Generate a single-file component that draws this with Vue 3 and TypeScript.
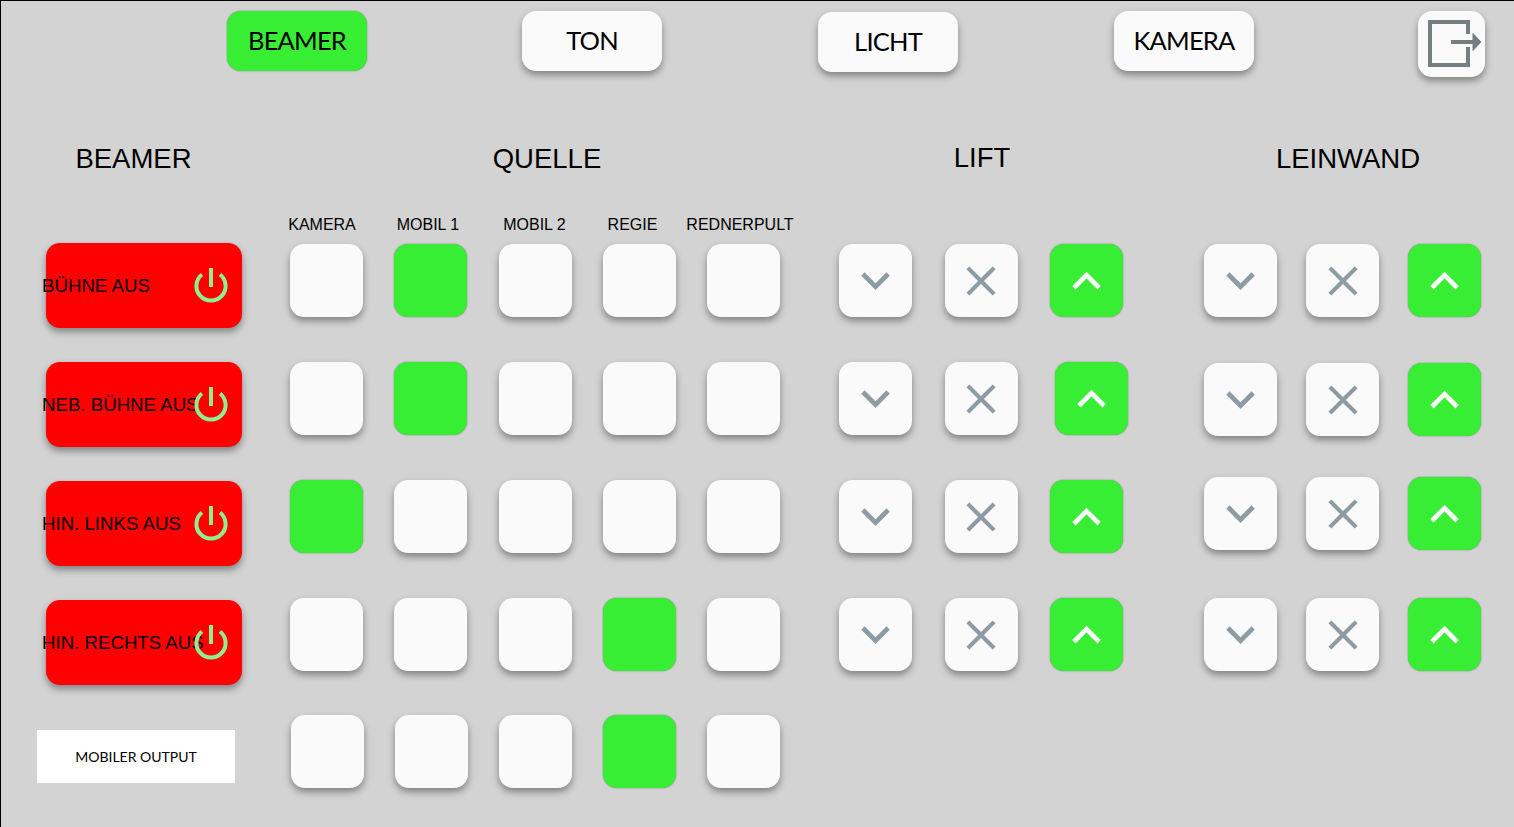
<script setup lang="ts">
const navItems = [
  { label: 'BEAMER', active: true },
  { label: 'TON', active: false },
  { label: 'LICHT', active: false },
  { label: 'KAMERA', active: false },
]

const beamers = ['BÜHNE AUS', 'NEB. BÜHNE AUS', 'HIN. LINKS AUS', 'HIN. RECHTS AUS']
const sources = ['KAMERA', 'MOBIL 1', 'MOBIL 2', 'REGIE', 'REDNERPULT']

// index of the selected source for each output row
const selected = [1, 1, 0, 3, 3]

const rows = [0, 1, 2, 3]
</script>

<template>
  <div class="page">
    <nav class="nav">
      <button
        v-for="item in navItems"
        :key="item.label"
        class="tile nav-btn"
        :class="{ on: item.active }"
      >
        {{ item.label }}
      </button>
      <button class="tile exit" aria-label="Abmelden">
        <svg width="67" height="66" viewBox="0 0 67 66" fill="none" stroke="#757f7f" stroke-width="4">
          <path d="M50 23V11H12V54H50V36" />
          <path d="M33 31H56" />
          <path d="M55 22.5L63 31L55 39.5Z" fill="#757f7f" stroke-width="1" />
        </svg>
      </button>
    </nav>

    <main class="board">
      <section>
        <h2 class="title">BEAMER</h2>
        <div class="power-list">
          <button v-for="name in beamers" :key="name" class="power">
            <span class="power-label">{{ name }}</span>
            <svg class="power-icon" width="40" height="40" viewBox="0 0 40 40" fill="none" stroke="#90ee90">
              <path d="M11 9.5A14.6 14.6 0 1 0 29 9.5" stroke-width="4" />
              <path d="M20 3V22" stroke-width="4" />
            </svg>
          </button>
          <div class="mobile-output">MOBILER OUTPUT</div>
        </div>
      </section>

      <section>
        <h2 class="title">QUELLE</h2>
        <div class="source-labels">
          <span v-for="s in sources" :key="s">{{ s }}</span>
        </div>
        <div class="source-rows">
          <div v-for="(active, r) in selected" :key="r" class="source-row">
            <button
              v-for="(s, i) in sources"
              :key="s"
              class="tile square"
              :class="{ on: i === active }"
              :aria-label="s"
            ></button>
          </div>
        </div>
      </section>

      <section>
        <h2 class="title lift-title">LIFT</h2>
        <div class="motor-rows lift">
          <div v-for="r in rows" :key="r" class="motor-row">
            <button class="tile square" aria-label="runter">
              <svg class="chevron" width="56" height="56" viewBox="0 0 24 24"><path d="M6.4 9L11.8 14.4L17.2 9" /></svg>
            </button>
            <button class="tile square" aria-label="stopp">
              <svg class="cross" width="50" height="50" viewBox="0 0 24 24"><path d="M19 6.41L17.59 5 12 10.59 6.41 5 5 6.41 10.59 12 5 17.59 6.41 19 12 13.41 17.59 19 19 17.59 13.41 12z" /></svg>
            </button>
            <button class="tile square on up" aria-label="hoch">
              <svg class="chevron" width="56" height="56" viewBox="0 0 24 24"><path d="M6.4 14.9L11.8 9.5L17.2 14.9" /></svg>
            </button>
          </div>
        </div>
      </section>

      <section class="screen">
        <h2 class="title">LEINWAND</h2>
        <div class="motor-rows leinwand">
          <div v-for="r in rows" :key="r" class="motor-row">
            <button class="tile square" aria-label="runter">
              <svg class="chevron" width="56" height="56" viewBox="0 0 24 24"><path d="M6.4 9L11.8 14.4L17.2 9" /></svg>
            </button>
            <button class="tile square" aria-label="stopp">
              <svg class="cross" width="50" height="50" viewBox="0 0 24 24"><path d="M19 6.41L17.59 5 12 10.59 6.41 5 5 6.41 10.59 12 5 17.59 6.41 19 12 13.41 17.59 19 19 17.59 13.41 12z" /></svg>
            </button>
            <button class="tile square on" aria-label="hoch">
              <svg class="chevron" width="56" height="56" viewBox="0 0 24 24"><path d="M6.4 14.9L11.8 9.5L17.2 14.9" /></svg>
            </button>
          </div>
        </div>
      </section>
    </main>
  </div>
</template>

<style>
html,
body {
  margin: 0;
  background: #d3d3d3;
}
</style>

<style scoped>
.page {
  box-sizing: border-box;
  width: 1514px;
  height: 827px;
  overflow: hidden;
  background: #d3d3d3;
  border-top: 1px solid #000;
  border-left: 1px solid #000;
  font-family: "Liberation Sans", Arial, sans-serif;
  color: #000;
}

button {
  padding: 0;
  border: 0;
  font: inherit;
  color: inherit;
}

.tile {
  display: flex;
  align-items: center;
  justify-content: center;
  background: #fafafa;
  border-radius: 14px;
  box-shadow: 0 4px 7px rgba(0, 0, 0, 0.38);
}

.tile.on {
  background: #38ee34;
  box-shadow: 0 0 1.5px rgba(0, 0, 0, 0.5);
}

.chevron {
  fill: none;
  stroke: #8d9ca3;
  stroke-width: 2;
}

.on .chevron {
  stroke: #fff;
}

.cross {
  fill: #8d9ca3;
}

.nav {
  display: flex;
  align-items: flex-start;
  height: 129px;
  padding: 10px 0 0 226px;
  box-sizing: border-box;
}

.nav-btn {
  width: 140px;
  height: 60px;
  margin-right: 156px;
  padding-bottom: 2px;
  font-family: Lato, "Open Sans", sans-serif;
  font-size: 25.5px;
  letter-spacing: -0.8px;
}

.nav-btn:first-child {
  margin-right: 155px;
}

.nav-btn:nth-child(3) {
  margin-top: 1px;
}

.exit {
  width: 67px;
  height: 66px;
  margin-left: 8px;
}

.board {
  display: grid;
  grid-template-columns: 265px 562px 308px 378px;
}

.screen {
  margin-left: 46px;
}

.title {
  height: 56px;
  margin: 0;
  font-size: 27.5px;
  font-weight: 400;
  line-height: 58px;
  text-align: center;
}

.lift-title {
  margin-top: -1px;
  margin-bottom: 1px;
}

.power-list {
  display: flex;
  flex-direction: column;
  align-items: flex-start;
  gap: 34px;
  padding: 57px 0 0 45px;
}

.power {
  position: relative;
  display: flex;
  align-items: center;
  width: 196px;
  height: 85px;
  flex: none;
  background: #f00;
  border-radius: 14px;
  box-shadow: 0 4px 7px rgba(0, 0, 0, 0.38);
  font-size: 18.67px;
  text-align: left;
  white-space: nowrap;
}

.power-label {
  margin-left: -4px;
}

.power-icon {
  position: absolute;
  top: 22px;
  right: 11px;
}

.mobile-output {
  display: flex;
  align-items: center;
  justify-content: center;
  width: 198px;
  height: 53px;
  margin: 11px 0 0 -9px;
  background: #fff;
  font-family: Lato, "Open Sans", sans-serif;
  font-size: 14px;
}

.source-labels {
  display: grid;
  grid-template-columns: 106px 106px 107px 89px 126px;
  height: 58px;
  padding-left: 3px;
  font-size: 16px;
  line-height: 78px;
  text-align: center;
  white-space: nowrap;
}

.source-rows {
  display: flex;
  flex-direction: column;
  gap: 45px;
}

.source-row {
  display: flex;
  gap: 31.25px;
  padding-left: 24px;
}

.source-row:last-child {
  gap: 31px;
  margin-top: -1px;
  padding-left: 25px;
}

.square {
  width: 73px;
  height: 73px;
  flex: none;
}

.motor-rows {
  display: flex;
  flex-direction: column;
  padding-top: 58px;
}

.motor-row {
  display: flex;
}

.lift {
  gap: 45px;
}

.lift .motor-row {
  gap: 32.5px;
  padding-left: 11px;
}

.lift .motor-row:nth-child(2) .up {
  margin-left: 5px;
}

.leinwand .motor-row {
  gap: 29px;
  padding-left: 22px;
}

.leinwand .motor-row:nth-child(2) {
  margin-top: 46px;
}

.leinwand .motor-row:nth-child(3) {
  margin-top: 41px;
}

.leinwand .motor-row:nth-child(4) {
  margin-top: 48px;
}
</style>
